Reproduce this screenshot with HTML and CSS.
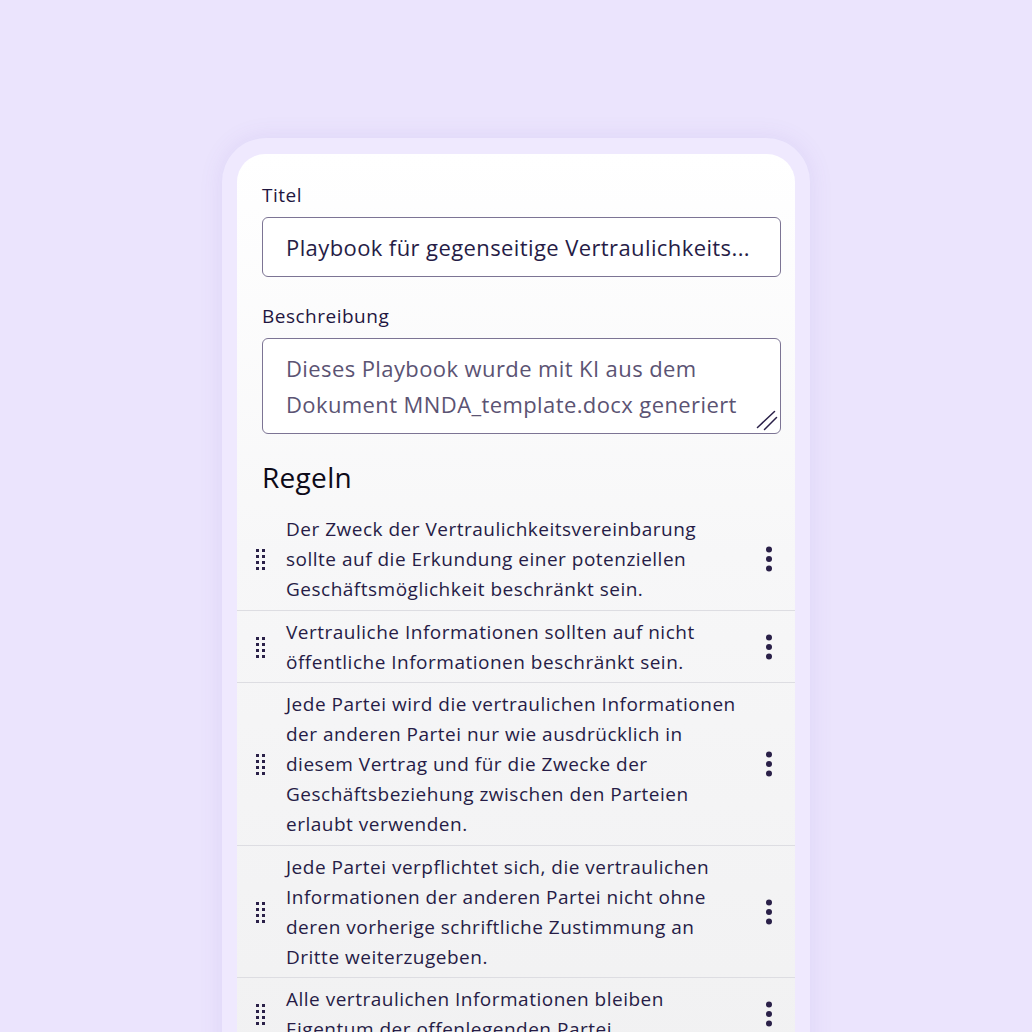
FILE: index.html
```html
<!DOCTYPE html>
<html lang="de">
<head>
<meta charset="utf-8">
<link rel="stylesheet" href="styles.css">
</head>
<body>
<div class="frame">
  <div class="card">
    <label class="label">Titel</label>
    <div class="input">Playbook für gegenseitige Vertraulichkeits...</div>
    <label class="label label-gap">Beschreibung</label>
    <div class="textarea">
      <p>Dieses Playbook wurde mit KI aus dem Dokument MNDA_template.docx generiert</p>
      <svg class="grip" width="26" height="26" viewBox="0 0 26 26"><path d="M3.5 20.5 L20.5 4.5 M10.5 22.5 L22.5 10.5" stroke="#2a2048" stroke-width="1.5" stroke-linecap="round"/></svg>
    </div>
    <h2 class="heading">Regeln</h2>
    <ul class="rules">
      <li class="rule">
        <svg class="handle" width="12" height="22" viewBox="0 0 12 22"><g fill="#2a2048"><rect x="1" y="1" width="3" height="3"/><rect x="7" y="1" width="3" height="3"/><rect x="1" y="7" width="3" height="3"/><rect x="7" y="7" width="3" height="3"/><rect x="1" y="13" width="3" height="3"/><rect x="7" y="13" width="3" height="3"/><rect x="1" y="19" width="3" height="3"/><rect x="7" y="19" width="3" height="3"/></g></svg>
        <p class="rule-text">Der Zweck der Vertraulichkeitsvereinbarung sollte auf die Erkundung einer potenziellen Geschäftsmöglichkeit beschränkt sein.</p>
        <svg class="kebab" width="8" height="26" viewBox="0 0 8 26"><g fill="#2a2048"><circle cx="4" cy="3.5" r="3"/><circle cx="4" cy="13" r="3"/><circle cx="4" cy="22.5" r="3"/></g></svg>
      </li>
      <li class="rule">
        <svg class="handle" width="12" height="22" viewBox="0 0 12 22"><g fill="#2a2048"><rect x="1" y="1" width="3" height="3"/><rect x="7" y="1" width="3" height="3"/><rect x="1" y="7" width="3" height="3"/><rect x="7" y="7" width="3" height="3"/><rect x="1" y="13" width="3" height="3"/><rect x="7" y="13" width="3" height="3"/><rect x="1" y="19" width="3" height="3"/><rect x="7" y="19" width="3" height="3"/></g></svg>
        <p class="rule-text">Vertrauliche Informationen sollten auf nicht öffentliche Informationen beschränkt sein.</p>
        <svg class="kebab" width="8" height="26" viewBox="0 0 8 26"><g fill="#2a2048"><circle cx="4" cy="3.5" r="3"/><circle cx="4" cy="13" r="3"/><circle cx="4" cy="22.5" r="3"/></g></svg>
      </li>
      <li class="rule">
        <svg class="handle" width="12" height="22" viewBox="0 0 12 22"><g fill="#2a2048"><rect x="1" y="1" width="3" height="3"/><rect x="7" y="1" width="3" height="3"/><rect x="1" y="7" width="3" height="3"/><rect x="7" y="7" width="3" height="3"/><rect x="1" y="13" width="3" height="3"/><rect x="7" y="13" width="3" height="3"/><rect x="1" y="19" width="3" height="3"/><rect x="7" y="19" width="3" height="3"/></g></svg>
        <p class="rule-text">Jede Partei wird die vertraulichen Informationen der anderen Partei nur wie ausdrücklich in diesem Vertrag und für die Zwecke der Geschäftsbeziehung zwischen den Parteien erlaubt verwenden.</p>
        <svg class="kebab" width="8" height="26" viewBox="0 0 8 26"><g fill="#2a2048"><circle cx="4" cy="3.5" r="3"/><circle cx="4" cy="13" r="3"/><circle cx="4" cy="22.5" r="3"/></g></svg>
      </li>
      <li class="rule">
        <svg class="handle" width="12" height="22" viewBox="0 0 12 22"><g fill="#2a2048"><rect x="1" y="1" width="3" height="3"/><rect x="7" y="1" width="3" height="3"/><rect x="1" y="7" width="3" height="3"/><rect x="7" y="7" width="3" height="3"/><rect x="1" y="13" width="3" height="3"/><rect x="7" y="13" width="3" height="3"/><rect x="1" y="19" width="3" height="3"/><rect x="7" y="19" width="3" height="3"/></g></svg>
        <p class="rule-text">Jede Partei verpflichtet sich, die vertraulichen Informationen der anderen Partei nicht ohne deren vorherige schriftliche Zustimmung an Dritte weiterzugeben.</p>
        <svg class="kebab" width="8" height="26" viewBox="0 0 8 26"><g fill="#2a2048"><circle cx="4" cy="3.5" r="3"/><circle cx="4" cy="13" r="3"/><circle cx="4" cy="22.5" r="3"/></g></svg>
      </li>
      <li class="rule">
        <svg class="handle" width="12" height="22" viewBox="0 0 12 22"><g fill="#2a2048"><rect x="1" y="1" width="3" height="3"/><rect x="7" y="1" width="3" height="3"/><rect x="1" y="7" width="3" height="3"/><rect x="7" y="7" width="3" height="3"/><rect x="1" y="13" width="3" height="3"/><rect x="7" y="13" width="3" height="3"/><rect x="1" y="19" width="3" height="3"/><rect x="7" y="19" width="3" height="3"/></g></svg>
        <p class="rule-text">Alle vertraulichen Informationen bleiben Eigentum der offenlegenden Partei.</p>
        <svg class="kebab" width="8" height="26" viewBox="0 0 8 26"><g fill="#2a2048"><circle cx="4" cy="3.5" r="3"/><circle cx="4" cy="13" r="3"/><circle cx="4" cy="22.5" r="3"/></g></svg>
      </li>
    </ul>
  </div>
</div>
</body>
</html>
```
FILE: styles.css
```css
* { box-sizing: border-box; }
html, body { margin: 0; padding: 0; }
body {
  background: #ebe4fd;
  height: 1032px;
  overflow: hidden;
  font-family: "Open Sans", "Noto Sans", sans-serif;
  color: #261c46;
}
.frame {
  margin: 138px 0 0 222px;
  width: 588px;
  height: 1000px;
  padding: 16px 15px 0;
  background: #efe9fe;
  border-radius: 44px;
  box-shadow: 0 0 24px rgba(110, 80, 190, 0.10);
}
.card {
  width: 558px;
  height: 980px;
  border-radius: 28px;
  background: linear-gradient(#ffffff 0px, #f7f7f8 400px, #f1f1f2 900px);
  padding: 29px 0 0;
  display: flex;
  flex-direction: column;
}
.label {
  display: block;
  margin: 0 25px;
  font-size: 19px;
  line-height: 24px;
  letter-spacing: 0.5px;
  font-weight: 500;
  color: #1f1640;
}
.label-gap { margin-top: 27px; }
.input {
  margin: 10px 14px 0 25px;
  height: 60px;
  border: 1.5px solid #7c7494;
  border-radius: 6px;
  background: #fff;
  padding: 0 23px;
  display: flex;
  align-items: center;
  font-size: 22px;
  letter-spacing: 0.4px;
  color: #261c46;
  white-space: nowrap;
  overflow: hidden;
}
.textarea {
  position: relative;
  margin: 10px 14px 0 25px;
  height: 96px;
  border: 1.5px solid #7c7494;
  border-radius: 6px;
  background: #fff;
  padding: 11px 23px 0;
}
.textarea p {
  margin: 0;
  font-size: 22px;
  line-height: 36px;
  letter-spacing: 0.4px;
  color: #5b5373;
}
.grip {
  position: absolute;
  right: 0;
  bottom: 0;
}
.heading {
  margin: 26px 25px 0;
  font-size: 28px;
  line-height: 34px;
  letter-spacing: 0.3px;
  font-weight: 500;
  color: #0d0a18;
}
.rules {
  list-style: none;
  margin: 14px 0 0;
  padding: 0;
}
.rule {
  display: flex;
  align-items: center;
  padding: 6px 0 5.5px 18px;
  border-bottom: 1px solid #dddde2;
}
.handle { flex: none; margin-right: 19px; }
.rule-text {
  margin: 0;
  width: 455px;
  font-size: 19px;
  line-height: 30px;
  letter-spacing: 0.5px;
  color: #261c46;
}
.kebab { flex: none; margin-left: 24px; }
```
